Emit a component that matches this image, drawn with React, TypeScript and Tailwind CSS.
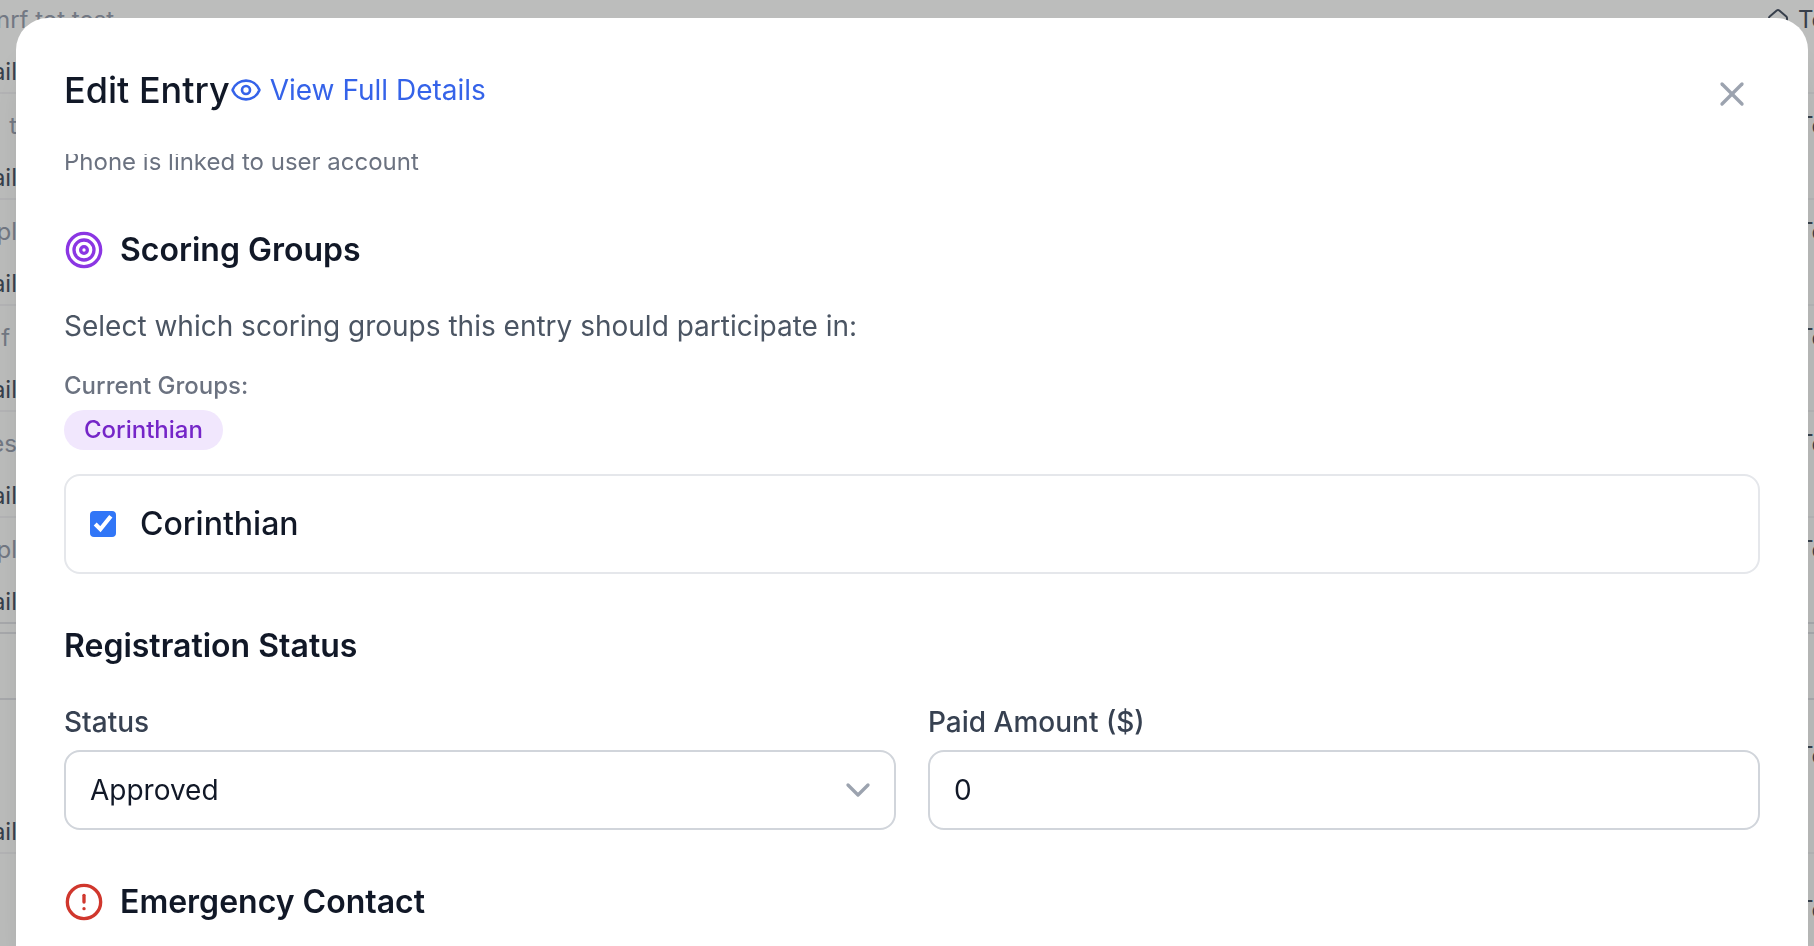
import React, { useEffect, useRef, useState } from 'react';
import { ChevronDown, CircleAlert, Eye, House, Target, X } from 'lucide-react';

const entryRows = [
  { name: 't', border: 'border-[#f0f1f3]' },
  { name: 'pl', border: 'border-[#f0f1f3]' },
  { name: 'f\u00a0', border: 'border-[#f0f1f3]' },
  { name: 'es', border: 'border-[#f0f1f3]' },
  { name: 'pl', border: 'border-[#e0e2e6]' },
];

function RowType() {
  return (
    <div className="flex h-8 w-12 shrink-0 items-center gap-2 overflow-hidden text-gray-600">
      <House className="size-6 shrink-0" />
      <span>Te</span>
    </div>
  );
}

function EntryList() {
  return (
    <div aria-hidden="true" className="h-full overflow-hidden bg-[#fbfcfb] text-2xl leading-8 whitespace-nowrap">
      <div className="flex h-[94px] flex-col justify-end gap-5 border-b-2 border-[#f0f1f3] pb-1">
        <div className="flex justify-between">
          <div className="flex w-[114px] justify-end text-gray-400">nrf tot test</div>
          <RowType />
        </div>
        <div className="flex w-[17px] justify-end text-gray-600">ail</div>
      </div>
      {entryRows.map((row, i) => (
        <div key={i} className={`flex h-[106px] flex-col justify-end gap-5 border-b-2 pb-1 ${row.border}`}>
          <div className="flex justify-between">
            <div className="flex w-[17px] justify-end text-gray-400">{row.name}</div>
            <RowType />
          </div>
          <div className="flex w-[17px] justify-end text-gray-600">ail</div>
        </div>
      ))}
      <div className="mt-2 h-[68px] border-y-2 border-[#e0e2e6]" />
      <div className="flex h-[154px] flex-col justify-between border-b-2 border-[#f0f1f3] pt-10 pb-1">
        <div className="flex justify-end">
          <RowType />
        </div>
        <div className="flex w-[17px] justify-end text-gray-600">ail</div>
      </div>
      <div className="flex justify-end pt-10">
        <RowType />
      </div>
    </div>
  );
}

export default function App() {
  const bodyRef = useRef<HTMLDivElement>(null);
  const [inGroup, setInGroup] = useState(true);
  const [status, setStatus] = useState('approved');
  const [paidAmount, setPaidAmount] = useState('0');

  useEffect(() => {
    if (bodyRef.current) {
      bodyRef.current.scrollTop = 8;
    }
  }, []);

  return (
    <div className="h-screen overflow-hidden font-['Inter',sans-serif]">
      <EntryList />

      <div className="fixed inset-0 flex overflow-hidden bg-black/25 pt-[18px] pr-1.5 pl-4">
        <div
          role="dialog"
          aria-labelledby="edit-entry-title"
          className="flex min-w-0 flex-1 flex-col overflow-hidden rounded-t-[32px] bg-white shadow-[0_40px_50px_-10px_rgba(0,0,0,0.12),0_16px_20px_-12px_rgba(0,0,0,0.1)]"
        >
          <div className="flex items-end justify-between px-12 pt-12 pb-10">
            <div className="flex items-center">
              <h3 id="edit-entry-title" className="text-4xl leading-[48px] font-medium text-[#111827]">
                Edit Entry
              </h3>
              <a href="#details" className="flex items-center gap-2 text-[28px] leading-10 text-[#3563e9]">
                <Eye className="size-8" />
                View Full Details
              </a>
            </div>
            <button type="button" aria-label="Close" className="mr-2 text-[#9ca3af]">
              <X className="size-10" />
            </button>
          </div>

          <div ref={bodyRef} className="flex-1 overflow-y-auto px-12 pb-12 [scrollbar-width:none]">
            <p className="text-2xl leading-8 text-[#6b7280]">Phone is linked to user account</p>

            <section className="mt-12">
              <h4 className="flex items-center gap-4 text-[32px] leading-[48px] font-semibold text-[#111827]">
                <Target className="size-10 text-[#8b36e3]" />
                Scoring Groups
              </h4>
              <p className="mt-8 text-[28px] leading-10 text-[#4b5563]">
                Select which scoring groups this entry should participate in:
              </p>
              <p className="mt-6 text-2xl leading-8 font-medium text-[#6b7280]">Current Groups:</p>
              <div className="mt-2 flex">
                <span className="rounded-full bg-[#f1e7fd] px-5 py-1 text-2xl leading-8 font-medium text-[#7526c8]">
                  Corinthian
                </span>
              </div>
              <label className="mt-6 flex h-[100px] items-center gap-6 rounded-2xl border-2 border-[#e5e7eb] px-6 text-[32px] leading-[48px] font-medium text-[#111827]">
                <input
                  type="checkbox"
                  checked={inGroup}
                  onChange={(e) => setInGroup(e.target.checked)}
                  className="size-[26px] overflow-hidden rounded-sm accent-[#3176f7] [clip-path:inset(0_round_4px)]"
                />
                Corinthian
              </label>
            </section>

            <section className="mt-12">
              <h4 className="text-[32px] leading-[48px] font-semibold text-[#111827]">Registration Status</h4>
              <div className="mt-8 grid grid-cols-2 gap-8">
                <div>
                  <label htmlFor="status" className="block text-[28px] leading-10 font-medium text-[#374151]">
                    Status
                  </label>
                  <div className="relative mt-2">
                    <select
                      id="status"
                      value={status}
                      onChange={(e) => setStatus(e.target.value)}
                      className="h-20 w-full appearance-none rounded-2xl border-2 border-[#d1d5db] bg-white px-6 text-[28px] leading-10 text-[#111827]"
                    >
                      <option value="approved">Approved</option>
                    </select>
                    <ChevronDown className="pointer-events-none absolute top-5 right-[18px] size-10 text-[#9ca3af]" />
                  </div>
                </div>
                <div>
                  <label htmlFor="paid-amount" className="block text-[28px] leading-10 font-medium text-[#374151]">
                    Paid Amount ($)
                  </label>
                  <input
                    id="paid-amount"
                    type="text"
                    inputMode="decimal"
                    value={paidAmount}
                    onChange={(e) => setPaidAmount(e.target.value)}
                    className="mt-2 block h-20 w-full rounded-2xl border-2 border-[#d1d5db] bg-white px-6 text-[28px] leading-10 text-[#111827]"
                  />
                </div>
              </div>
            </section>

            <section className="mt-12">
              <h4 className="flex items-center gap-4 text-[32px] leading-[48px] font-semibold text-[#111827]">
                <CircleAlert className="size-10 text-[#d0372d]" />
                Emergency Contact
              </h4>
            </section>
          </div>
        </div>
      </div>
    </div>
  );
}
